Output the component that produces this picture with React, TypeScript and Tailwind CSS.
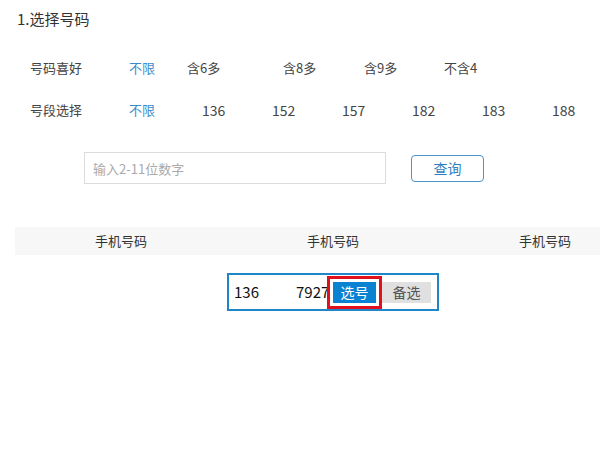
import React from "react";

const font = "font-['Noto_Sans_CJK_SC','Liberation_Sans',sans-serif]";

const likes = [
  { label: "不限", w: "w-[58px]", active: true },
  { label: "含6多", w: "w-[96px]" },
  { label: "含8多", w: "w-[81px]" },
  { label: "含9多", w: "w-[80px]" },
  { label: "不含4", w: "w-[80px]" },
];

const prefixes = ["136", "152", "157", "182", "183", "188"];

export default function App() {
  return (
    <div className={`w-[600px] h-[450px] overflow-hidden bg-white text-[#444] ${font}`}>
      <div className="pt-[10px] pl-[17px] text-[15px] leading-[18px] text-[#333]">1.选择号码</div>

      {/* filters */}
      <div className="mt-[19px] pl-[30px] flex items-center h-[42px] text-[13px]">
        <div className="w-[99px] shrink-0">号码喜好</div>
        {likes.map((l) => (
          <div key={l.label} className={`${l.w} shrink-0 ${l.active ? "text-[#3a8ccb]" : ""}`}>
            {l.label}
          </div>
        ))}
      </div>
      <div className="pl-[30px] flex items-center h-[42px] text-[13px]">
        <div className="w-[99px] shrink-0">号段选择</div>
        <div className="w-[73px] shrink-0 text-[#3a8ccb]">不限</div>
        {prefixes.map((p) => (
          <div key={p} className="w-[70px] shrink-0 text-[14px]">
            {p}
          </div>
        ))}
      </div>

      {/* search */}
      <div className="mt-[21px] pl-[84px] flex items-center gap-[25px]">
        <input
          className="w-[302px] h-[32px] border border-[#dcdcdc] px-[8px] text-[13px] outline-none placeholder:text-[#aaa]"
          placeholder="输入2-11位数字"
        />
        <button className="w-[73px] h-[27px] rounded-[4px] border border-[#4a94c8] text-[#2f7fbf] text-[14px] leading-none">
          查询
        </button>
      </div>

      {/* results */}
      <div className="mt-[43px] ml-[15px] w-[636px]">
        <div className="grid grid-cols-3 h-[28px] bg-[#f7f7f7] text-[13px] items-center text-center text-[#333]">
          <div>手机号码</div>
          <div>手机号码</div>
          <div>手机号码</div>
        </div>
        <div className="grid grid-cols-3 mt-[18px]">
          <div />
          <div className="h-[38px] border-2 border-[#1e86c9] flex items-center pl-[5px] text-[15px] text-[#111]">
            <span className="w-[62px] shrink-0">136</span>
            <span className="w-[31px] shrink-0 whitespace-nowrap">7927</span>
            <div className="shrink-0 border-[3px] border-[#e0101c] p-[3px] bg-white relative">
              <div className="w-[43px] h-[21px] bg-[#0a82d2] text-white text-[14px] leading-[21px] text-center">
                选号
              </div>
            </div>
            <div className="w-[49px] shrink-0 h-[21px] bg-[#e0e0e0] text-[#555] text-[14px] leading-[21px] text-center">
              备选
            </div>
          </div>
          <div />
        </div>
      </div>
    </div>
  );
}
